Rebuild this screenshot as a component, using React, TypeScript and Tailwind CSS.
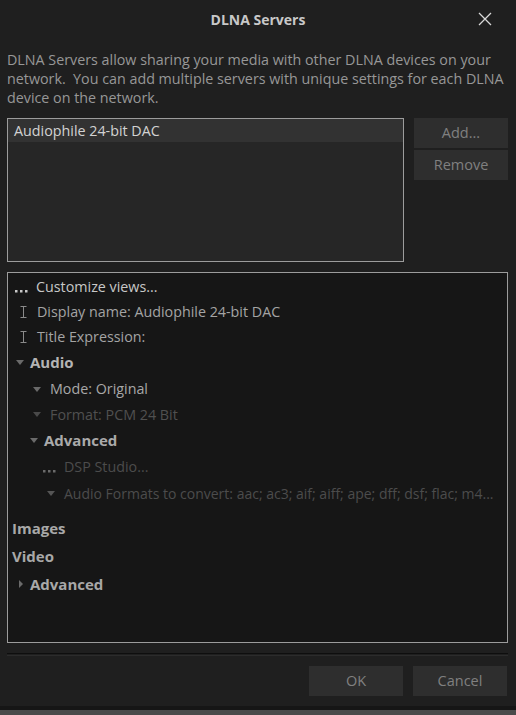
import React from "react";

const Down = ({ c = "#8a8a8a" }: { c?: string }) => (
  <svg width="8" height="5" viewBox="0 0 8 5" className="shrink-0">
    <path d="M0 0 L8 0 L4 5 Z" fill={c} />
  </svg>
);
const Right = ({ c = "#8a8a8a" }: { c?: string }) => (
  <svg width="4" height="8" viewBox="0 0 4 8" className="shrink-0">
    <path d="M0 0 L4 4 L0 8 Z" fill={c} />
  </svg>
);
const Dots = ({ c = "#c8c8c8" }: { c?: string }) => (
  <svg width="13" height="4" viewBox="0 0 13 4" className="shrink-0 mt-[7px]">
    <rect x="0" y="1" width="2.5" height="2.5" fill={c} />
    <rect x="5" y="1" width="2.5" height="2.5" fill={c} />
    <rect x="10" y="1" width="2.5" height="2.5" fill={c} />
  </svg>
);
const IBeam = ({ c = "#8a8a8a" }: { c?: string }) => (
  <svg width="7" height="12" viewBox="0 0 7 12" className="shrink-0">
    <path d="M0.5 0.5 H6.5 M3.5 0.5 V11.5 M0.5 11.5 H6.5" stroke={c} strokeWidth="1" fill="none" />
  </svg>
);

export default function App() {
  return (
    <div
      className="w-[516px] h-[715px] bg-[#1f1f1f] flex flex-col overflow-hidden"
      style={{ fontFamily: '"Open Sans", "Noto Sans", sans-serif' }}
    >
      <div className="relative h-[38px] flex items-center justify-center">
        <span className="text-[14px] font-bold text-[#c8c8c8]">DLNA Servers</span>
        <svg className="absolute left-[478px] top-[12px]" width="14" height="14" viewBox="0 0 14 14">
          <path d="M1 1 L13 13 M13 1 L1 13" stroke="#d8d8d8" strokeWidth="1.3" />
        </svg>
      </div>
      <p className="px-[7px] pt-[12px] text-[14.3px] leading-[19px] text-[#979797]">
        DLNA Servers allow sharing your media with other DLNA devices on your network.&nbsp; You can add multiple servers with unique settings for each DLNA device on the network.
      </p>
      <div className="flex gap-[10px] pl-[7px] mt-[11px]">
        <div className="w-[397px] h-[144px] border border-[#9c9c9c] bg-[#262626]">
          <div className="h-[23px] bg-[#323232] flex items-center pl-[6px] text-[14.3px] text-[#d2d2d2]">
            Audiophile 24-bit DAC
          </div>
        </div>
        <div className="flex flex-col gap-[2px]">
          <div className="w-[94px] h-[30px] bg-[#2e2e2e] flex items-center justify-center text-[14.5px] text-[#808080]">Add...</div>
          <div className="w-[94px] h-[30px] bg-[#2e2e2e] flex items-center justify-center text-[14.5px] text-[#808080]">Remove</div>
        </div>
      </div>
      <div className="ml-[7px] mt-[10px] w-[501px] h-[371px] border border-[#9c9c9c] bg-[#161616] text-[14.3px] overflow-hidden">
        <div className="flex items-center h-[26px] pt-[2px] pl-[7px] gap-[8px] text-[#c8c8c8]">
          <Dots />
          <span>Customize views...</span>
        </div>
        <div className="flex items-center h-[25px] pl-[12px] gap-[10px] text-[#a4a4a4]">
          <IBeam />
          <span>Display name: Audiophile 24-bit DAC</span>
        </div>
        <div className="flex items-center h-[25px] pl-[12px] gap-[10px] text-[#a4a4a4]">
          <IBeam />
          <span>Title Expression:</span>
        </div>
        <div className="flex items-center h-[27px] pl-[8px] gap-[6px] text-[15px] font-bold text-[#b4b4b4]">
          <Down c="#6a6a6a" />
          <span>Audio</span>
        </div>
        <div className="flex items-center h-[26px] pl-[25px] gap-[9px] text-[#a8a8a8]">
          <Down c="#6a6a6a" />
          <span>Mode: Original</span>
        </div>
        <div className="flex items-center h-[25px] pl-[25px] gap-[9px] text-[#505050]">
          <Down c="#4a4a4a" />
          <span>Format: PCM 24 Bit</span>
        </div>
        <div className="flex items-center h-[27px] pl-[22px] gap-[6px] text-[15px] font-bold text-[#aaaaaa]">
          <Down c="#6a6a6a" />
          <span>Advanced</span>
        </div>
        <div className="flex items-center h-[26px] pl-[35px] gap-[8px] text-[#4c4c4c]">
          <Dots c="#6a6a6a" />
          <span>DSP Studio...</span>
        </div>
        <div className="flex items-center h-[26px] pl-[39px] gap-[9px] text-[#4c4c4c]">
          <Down c="#555555" />
          <span className="whitespace-nowrap text-[14px]">Audio Formats to convert: aac; ac3; aif; aiff; ape; dff; dsf; flac; m4...</span>
        </div>
        <div className="flex items-center h-[28px] mt-[8px] pl-[4px] text-[15px] font-bold text-[#a8a8a8]">
          <span>Images</span>
        </div>
        <div className="flex items-center h-[28px] pl-[4px] text-[15px] font-bold text-[#a8a8a8]">
          <span>Video</span>
        </div>
        <div className="flex items-center h-[28px] pl-[11px] gap-[7px] text-[15px] font-bold text-[#a8a8a8]">
          <Right c="#6a6a6a" />
          <span>Advanced</span>
        </div>
      </div>
      <div className="ml-[7px] w-[501px] mt-[10px] border-t border-[#0e0e0e] border-b border-b-[#2c2c2c] h-[3px]" />
      <div className="flex justify-end gap-[10px] pr-[9px] mt-[10px]">
        <div className="w-[94px] h-[30px] bg-[#2e2e2e] flex items-center justify-center text-[14.5px] text-[#808080]">OK</div>
        <div className="w-[94px] h-[30px] bg-[#2e2e2e] flex items-center justify-center text-[14.5px] text-[#808080]">Cancel</div>
      </div>
      <div className="mt-auto h-[9px] flex flex-col">
        <div className="h-[4px] bg-[#161616]" />
        <div className="flex-1 bg-[#4a4a4a]" />
      </div>
    </div>
  );
}
